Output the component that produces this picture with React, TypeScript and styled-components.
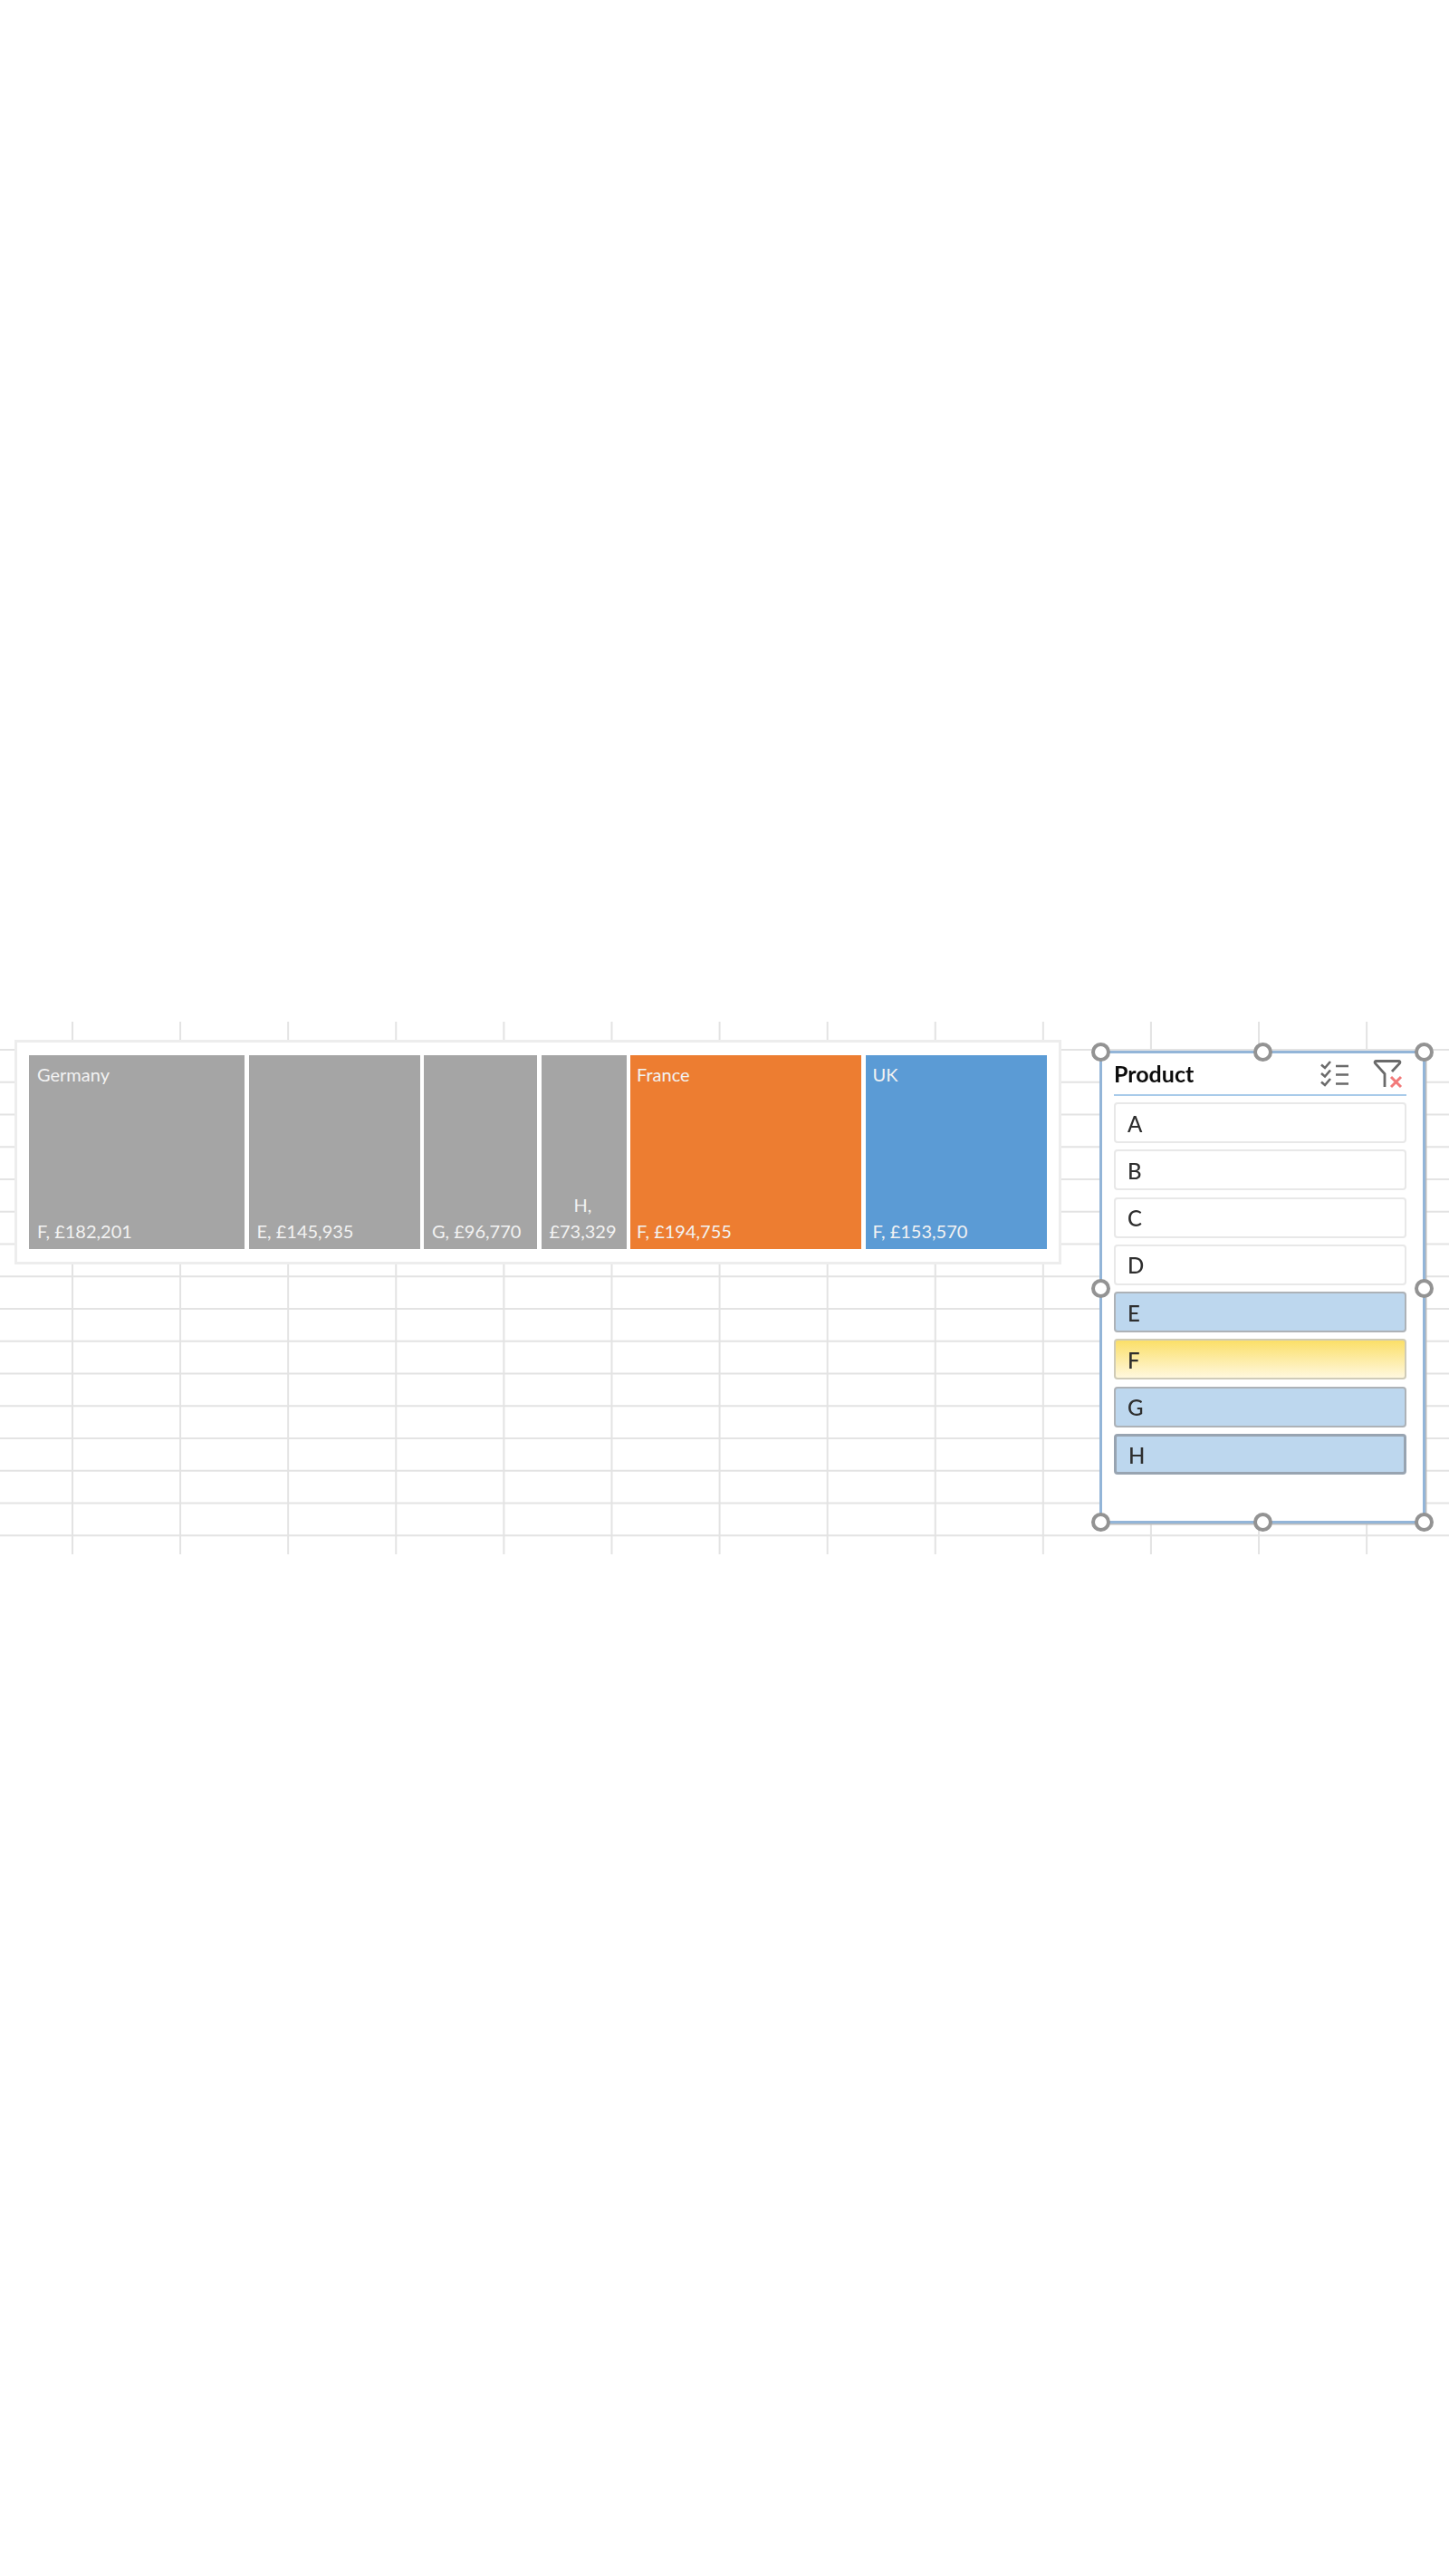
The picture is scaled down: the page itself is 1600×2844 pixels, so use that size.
import React from "react";
import styled, {createGlobalStyle} from "styled-components";

const GlobalStyle = createGlobalStyle`
  html, body {
    margin: 0;
    padding: 0;
    background: #fff;
  }
`;

const Page = styled.div`
  width: 1600px;
  height: 2844px;
  padding-top: 1128px;
  box-sizing: border-box;
  overflow: hidden;
  font-family: "Lato", "Open Sans", sans-serif;
`;

const Sheet = styled.div`
  display: flex;
  align-items: flex-start;
  height: 588px;
  padding-left: 16px;
  box-sizing: border-box;
  filter: blur(0.7px);
  background-image:
    linear-gradient(to right, #e3e3e3 2px, transparent 2px),
    linear-gradient(to bottom, #e3e3e3 2px, transparent 2px);
  background-size: 119.1px 100%, 100% 35.75px;
  background-position: 79px 0, 0 30px;
  background-repeat: repeat-x, repeat-y;
`;

const ChartFrame = styled.div`
  display: flex;
  gap: 4.5px;
  width: 1156px;
  height: 248px;
  margin-top: 20px;
  padding: 14px 14px 14px 13px;
  box-sizing: border-box;
  background: #fff;
  border: 3px solid #ededed;
`;

const Tile = styled.div<{$width: number; $color: string; $inset: number; $center?: boolean}>`
  display: flex;
  flex-direction: column;
  flex: none;
  width: ${(props) => props.$width}px;
  padding: 7px 8px 5px ${(props) => props.$inset}px;
  box-sizing: border-box;
  background: ${(props) => props.$color};
  color: #f2f2f2;
  font-size: 20px;
  line-height: 29px;
  text-align: ${(props) => (props.$center ? "center" : "left")};
`;

const TileValue = styled.div`
  margin-top: auto;
`;

const Slicer = styled.div`
  position: relative;
  width: 360px;
  margin: 32px 0 0 42px;
  padding: 6px 18px 0 13px;
  height: 522px;
  box-sizing: border-box;
  background: #fff;
  border: 3px solid #93b5d8;
  box-shadow: 1.5px 1.5px 0 #bdbdbd;
`;

const SlicerHeader = styled.div`
  display: flex;
  align-items: center;
  height: 39px;
  margin-bottom: 7px;
  border-bottom: 2px solid #a9cbea;
`;

const SlicerTitle = styled.div`
  flex: 1;
  margin-top: -8px;
  font-size: 25px;
  font-weight: 700;
  color: #0c0c0c;
`;

const IconGroup = styled.div`
  display: flex;
  align-items: center;
  gap: 26px;
  margin-top: -6px;
  margin-right: 4px;
`;

const ItemList = styled.div`
  display: flex;
  flex-direction: column;
  gap: 7.3px;
`;

type ItemState = "off" | "on" | "hover" | "focus";

const itemStyles: Record<ItemState, string> = {
  off: "background: #fff; border: 2px solid #e8e8e8;",
  on: "background: #bdd7ee; border: 2px solid #adb2b7;",
  hover: "background: linear-gradient(to bottom, #fbdf68, #fff8de); border: 2px solid #cfcbb8;",
  focus: "background: #bdd7ee; border: 3px solid #98a4b1;",
};

const Item = styled.div<{$state: ItemState}>`
  display: flex;
  align-items: center;
  height: 45px;
  padding-left: 13px;
  padding-top: 1px;
  box-sizing: border-box;
  border-radius: 4px;
  font-size: 24px;
  font-weight: 500;
  color: #2e2e2e;
  ${(props) => itemStyles[props.$state]}
`;

const Handle = styled.span<{$x: "left" | "mid" | "right"; $y: "top" | "mid" | "bottom"}>`
  position: absolute;
  width: 21px;
  height: 21px;
  box-sizing: border-box;
  border: 4px solid #939393;
  border-radius: 50%;
  background: #fff;
  left: ${(props) => (props.$x === "left" ? "-12px" : props.$x === "mid" ? "167px" : "auto")};
  right: ${(props) => (props.$x === "right" ? "-12px" : "auto")};
  top: ${(props) => (props.$y === "top" ? "-12px" : props.$y === "mid" ? "249px" : "auto")};
  bottom: ${(props) => (props.$y === "bottom" ? "-12px" : "auto")};
`;

function MultiSelectIcon() {
  return (
    <svg width="32" height="30" viewBox="0 0 32 30" fill="none" stroke="#6a6a6a" strokeWidth="2.6">
      <path d="M1 4.5l4 3.5 6-7" />
      <path d="M1 14l4 3.5 6-7" />
      <path d="M1 23.5l4 3.5 6-7" />
      <path d="M17 6h14M17 15.5h14M17 25.5h14" />
    </svg>
  );
}

function ClearFilterIcon() {
  return (
    <svg width="33" height="32" viewBox="0 0 33 32" fill="none">
      <path d="M4 1.5h24q3 0 1.5 2.5L21 13M4 1.5q-3 0-1.5 2.5L13 15.5V30" stroke="#6a6a6a" strokeWidth="2.8" />
      <path d="M20 19l11 11M31 19L20 30" stroke="#f27a7a" strokeWidth="3" />
    </svg>
  );
}

const tiles = [
  {width: 238, color: "#a5a5a5", inset: 9, label: "Germany", value: "F, £182,201"},
  {width: 189, color: "#a5a5a5", inset: 9, value: "E, £145,935"},
  {width: 125, color: "#a5a5a5", inset: 9, value: "G, £96,770"},
  {width: 94, color: "#a5a5a5", inset: 6, value: "H, £73,329", center: true},
  {width: 255, color: "#ed7d31", inset: 7, label: "France", value: "F, £194,755"},
  {width: 200, color: "#5b9bd5", inset: 8, label: "UK", value: "F, £153,570"},
];

const items: {name: string; state: ItemState}[] = [
  {name: "A", state: "off"},
  {name: "B", state: "off"},
  {name: "C", state: "off"},
  {name: "D", state: "off"},
  {name: "E", state: "on"},
  {name: "F", state: "hover"},
  {name: "G", state: "on"},
  {name: "H", state: "focus"},
];

export default function App() {
  return (
    <Page>
      <GlobalStyle />
      <Sheet>
        <ChartFrame>
          {tiles.map((tile) => (
            <Tile
              key={tile.value}
              $width={tile.width}
              $color={tile.color}
              $inset={tile.inset}
              $center={tile.center}
            >
              {tile.label && <div>{tile.label}</div>}
              <TileValue>{tile.value}</TileValue>
            </Tile>
          ))}
        </ChartFrame>
        <Slicer>
          <SlicerHeader>
            <SlicerTitle>Product</SlicerTitle>
            <IconGroup>
              <MultiSelectIcon />
              <ClearFilterIcon />
            </IconGroup>
          </SlicerHeader>
          <ItemList>
            {items.map((item) => (
              <Item key={item.name} $state={item.state}>{item.name}</Item>
            ))}
          </ItemList>
          <Handle $x="left" $y="top" />
          <Handle $x="mid" $y="top" />
          <Handle $x="right" $y="top" />
          <Handle $x="left" $y="mid" />
          <Handle $x="right" $y="mid" />
          <Handle $x="left" $y="bottom" />
          <Handle $x="mid" $y="bottom" />
          <Handle $x="right" $y="bottom" />
        </Slicer>
      </Sheet>
    </Page>
  );
}
